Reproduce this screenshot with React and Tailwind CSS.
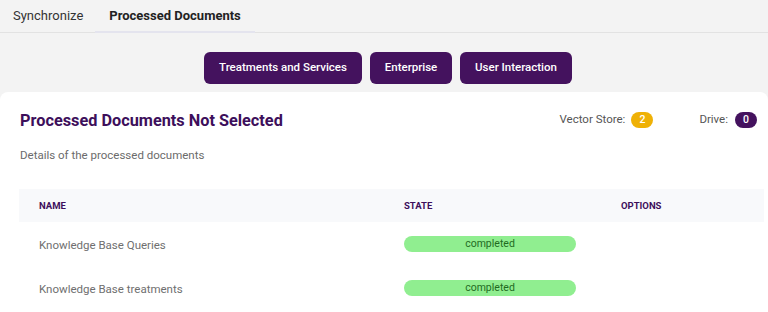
export default function App() {
  const rows = ["Knowledge Base Queries", "Knowledge Base treatments"];
  return (
    <div className="w-[768px] h-[312px] overflow-hidden bg-[#f3f3f3]" style={{ fontFamily: "Roboto, 'Liberation Sans', sans-serif" }}>
      <div className="flex h-[33px] border-b border-[#e2e2e2] pl-[13px]">
        <div className="flex items-center pr-[12px] text-[13px] text-[#333]">Synchronize</div>
        <div className="flex items-center px-[14px] text-[13px] font-bold text-[#222] border-b-2 border-[#e4e4ee] -mb-px">Processed Documents</div>
      </div>
      <div className="flex justify-center gap-[8px] pt-[19px] pb-[8px] pl-[8px]">
        <button className="h-[32px] w-[158px] rounded-[6px] bg-[#44125e] text-white text-[11.5px] font-medium">Treatments and Services</button>
        <button className="h-[32px] w-[82px] rounded-[6px] bg-[#44125e] text-white text-[11.5px] font-medium">Enterprise</button>
        <button className="h-[32px] w-[112px] rounded-[6px] bg-[#44125e] text-white text-[11.5px] font-medium">User Interaction</button>
      </div>
      <div className="bg-white rounded-tl-[8px] rounded-tr-[8px] h-[230px] pt-[19px]">
        <div className="flex items-center h-[20px] px-[20px]">
          <div className="text-[16.3px] font-bold text-[#3d0f5b] leading-[20px]">Processed Documents Not Selected</div>
          <div className="ml-auto flex items-center text-[11.5px] text-[#555] mt-[-3px] mr-[-9px]">
            <span>Vector Store:</span>
            <span className="ml-[6px] h-[16px] w-[22px] rounded-full bg-[#efb106] text-white text-[10.5px] font-medium flex items-center justify-center">2</span>
            <span className="ml-[46px]">Drive:</span>
            <span className="ml-[7px] h-[16px] w-[22px] rounded-full bg-[#44125e] text-white text-[10.5px] font-medium flex items-center justify-center">0</span>
          </div>
        </div>
        <div className="px-[20px] mt-[17px] h-[14px] leading-[14px] text-[11.5px] text-[#6b6b6b]">Details of the processed documents</div>
        <div className="ml-[19px] mr-[4px] mt-[27px]">
          <div className="flex items-center h-[33px] pt-[2px] bg-[#f8f9fb] text-[9.5px] font-bold text-[#3d0f5b]">
            <div className="w-[365px] pl-[20px]">NAME</div>
            <div className="w-[217px] pl-[20px]">STATE</div>
            <div className="pl-[20px]">OPTIONS</div>
          </div>
          {rows.map((r) => (
            <div key={r} className="flex items-center h-[44px]">
              <div className="w-[365px] pl-[20px] pt-[3px] text-[11.5px] text-[#6f6f6f]">{r}</div>
              <div className="w-[217px] pl-[20px]">
                <div className="w-[172px] h-[16px] rounded-full bg-[#90ee90] text-[10.5px] text-[#1f6b1f] flex items-center justify-center">completed</div>
              </div>
              <div />
            </div>
          ))}
        </div>
      </div>
    </div>
  );
}
